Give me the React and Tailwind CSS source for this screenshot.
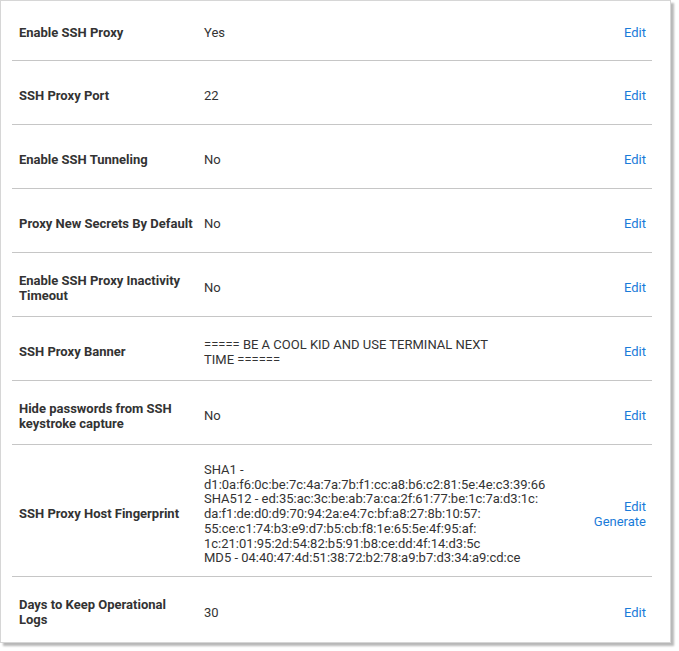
const rows = [
    { label: 'Enable SSH Proxy', value: 'Yes', first: true },
    { label: 'SSH Proxy Port', value: '22' },
    { label: 'Enable SSH Tunneling', value: 'No' },
    { label: 'Proxy New Secrets By Default', value: 'No' },
    { label: 'Enable SSH Proxy Inactivity Timeout', value: 'No' },
    { label: 'SSH Proxy Banner', value: ['===== BE A COOL KID AND USE TERMINAL NEXT', 'TIME ======'] },
    { label: 'Hide passwords from SSH keystroke capture', value: 'No' },
    {
        label: 'SSH Proxy Host Fingerprint',
        value: [
            'SHA1 -',
            'd1:0a:f6:0c:be:7c:4a:7a:7b:f1:cc:a8:b6:c2:81:5e:4e:c3:39:66',
            'SHA512 - ed:35:ac:3c:be:ab:7a:ca:2f:61:77:be:1c:7a:d3:1c:',
            'da:f1:de:d0:d9:70:94:2a:e4:7c:bf:a8:27:8b:10:57:',
            '55:ce:c1:74:b3:e9:d7:b5:cb:f8:1e:65:5e:4f:95:af:',
            '1c:21:01:95:2d:54:82:b5:91:b8:ce:dd:4f:14:d3:5c',
            'MD5 - 04:40:47:4d:51:38:72:b2:78:a9:b7:d3:34:a9:cd:ce',
        ],
        generate: true,
        tall: true,
    },
    { label: 'Days to Keep Operational Logs', value: '30', last: true },
];

export default function App() {
    return (
        <div className="bg-white w-[679px] h-[651px]" style={{ fontFamily: 'Roboto, "Liberation Sans", sans-serif' }}>
            <div className="w-[671px] h-[643px] border border-[#d6d6d6] bg-white shadow-[3px_3px_2px_rgba(0,0,0,0.28)] pl-[11px] pr-[18px]">
                {rows.map((r) => (
                    <SettingRow key={r.label} {...r} />
                ))}
            </div>
        </div>
    );
}

const SettingRow = ({ label, value, generate, first, last, tall }) => {
    const pad = first ? 'pt-[5px]' : 'pt-[8px]';
    return (
        <div
            className={`grid grid-cols-[192px_1fr_auto] items-center text-[13px] leading-[14.7px] text-[#333] ${
                last ? '' : 'border-b border-[#c6c6c6]'
            } ${first ? 'h-[60px]' : tall ? 'h-[132px]' : 'h-[64px]'}`}
        >
            <div className={`pl-[7px] pr-[10px] font-bold ${pad}`}>{label}</div>
            <div className={pad}>
                {Array.isArray(value) ? value.map((v) => <div key={v}>{v}</div>) : value}
            </div>
            <div className={`flex flex-col items-end pr-[6px] text-[#1a7bd9] ${pad}`}>
                <span>Edit</span>
                {generate && <span>Generate</span>}
            </div>
        </div>
    );
};
